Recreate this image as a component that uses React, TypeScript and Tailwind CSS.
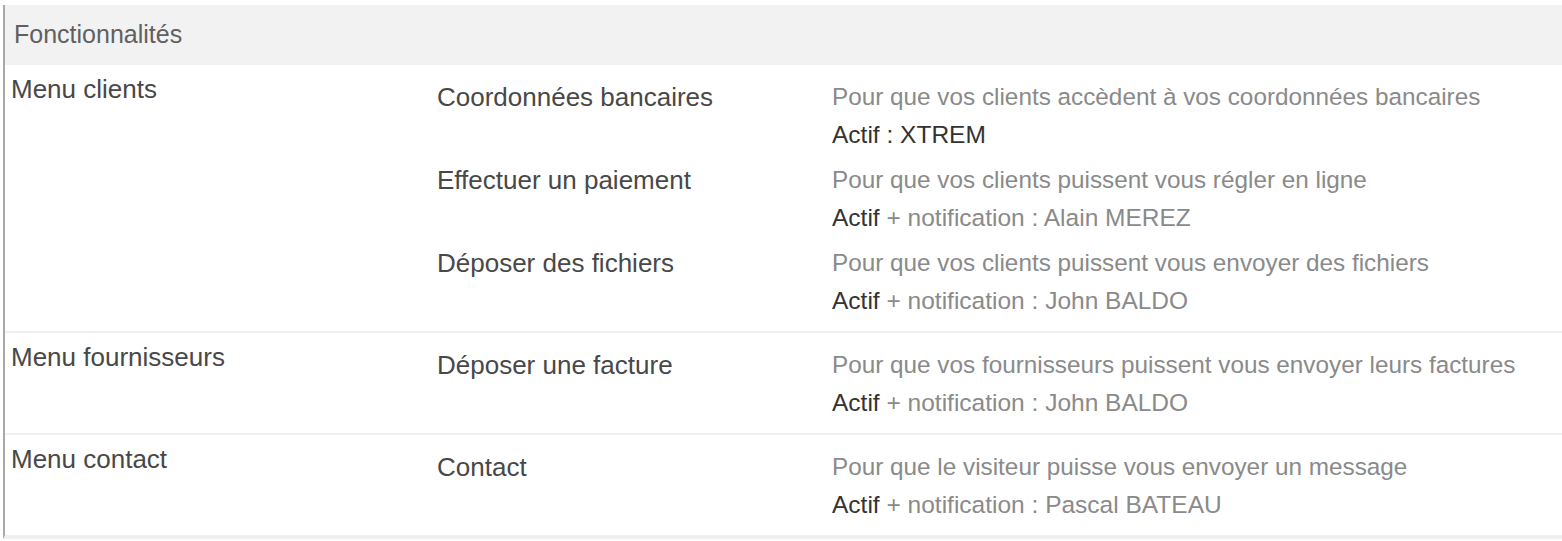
import React from "react";

type Item = { name: string; desc: string; actif: string; notif?: string };
type Row = { menu: string; items: Item[] };

const rows: Row[] = [
  {
    menu: "Menu clients",
    items: [
      { name: "Coordonnées bancaires", desc: "Pour que vos clients accèdent à vos coordonnées bancaires", actif: "Actif : XTREM" },
      { name: "Effectuer un paiement", desc: "Pour que vos clients puissent vous régler en ligne", actif: "Actif", notif: " + notification : Alain MEREZ" },
      { name: "Déposer des fichiers", desc: "Pour que vos clients puissent vous envoyer des fichiers", actif: "Actif", notif: " + notification : John BALDO" },
    ],
  },
  {
    menu: "Menu fournisseurs",
    items: [
      { name: "Déposer une facture", desc: "Pour que vos fournisseurs puissent vous envoyer leurs factures", actif: "Actif", notif: " + notification : John BALDO" },
    ],
  },
  {
    menu: "Menu contact",
    items: [
      { name: "Contact", desc: "Pour que le visiteur puisse vous envoyer un message", actif: "Actif", notif: " + notification : Pascal BATEAU" },
    ],
  },
];

export default function App() {
  return (
    <div
      className="w-[1562px] h-[541px] bg-white pt-[5px] overflow-hidden"
      style={{ fontFamily: '"Liberation Sans", Arial, sans-serif' }}
    >
      <div className="ml-[3px] border-l-2 border-[#a8a8a8] border-b-4 border-b-[#efefef]">
        <div className="h-[60px] bg-[#f2f2f2] flex items-center pl-[9px] text-[25px] text-[#606060]">
          Fonctionnalités
        </div>
        {rows.map((row, ri) => (
          <div
            key={ri}
            className={`grid grid-cols-[426px_395px_1fr] pl-[6px] pt-[13px] pb-[11px] ${
              ri < rows.length - 1 ? "border-b-2 border-[#f0f0f0]" : ""
            }`}
          >
            <div className="text-[26px] leading-[20px] text-[#484848] pt-[1px]">{row.menu}</div>
            <div className="col-span-2 flex flex-col gap-[7px]">
              {row.items.map((it, ii) => (
                <div key={ii} className="grid grid-cols-[395px_1fr]">
                  <div className="text-[26px] leading-[38px] text-[#484848]">{it.name}</div>
                  <div className="flex flex-col">
                    <div className="text-[24.3px] leading-[38px] text-[#8a8a8a]">{it.desc}</div>
                    <div className="text-[24.5px] leading-[38px] text-[#8a8a8a]">
                      <span className="text-[#333]">{it.actif}</span>
                      {it.notif}
                    </div>
                  </div>
                </div>
              ))}
            </div>
          </div>
        ))}
      </div>
    </div>
  );
}
